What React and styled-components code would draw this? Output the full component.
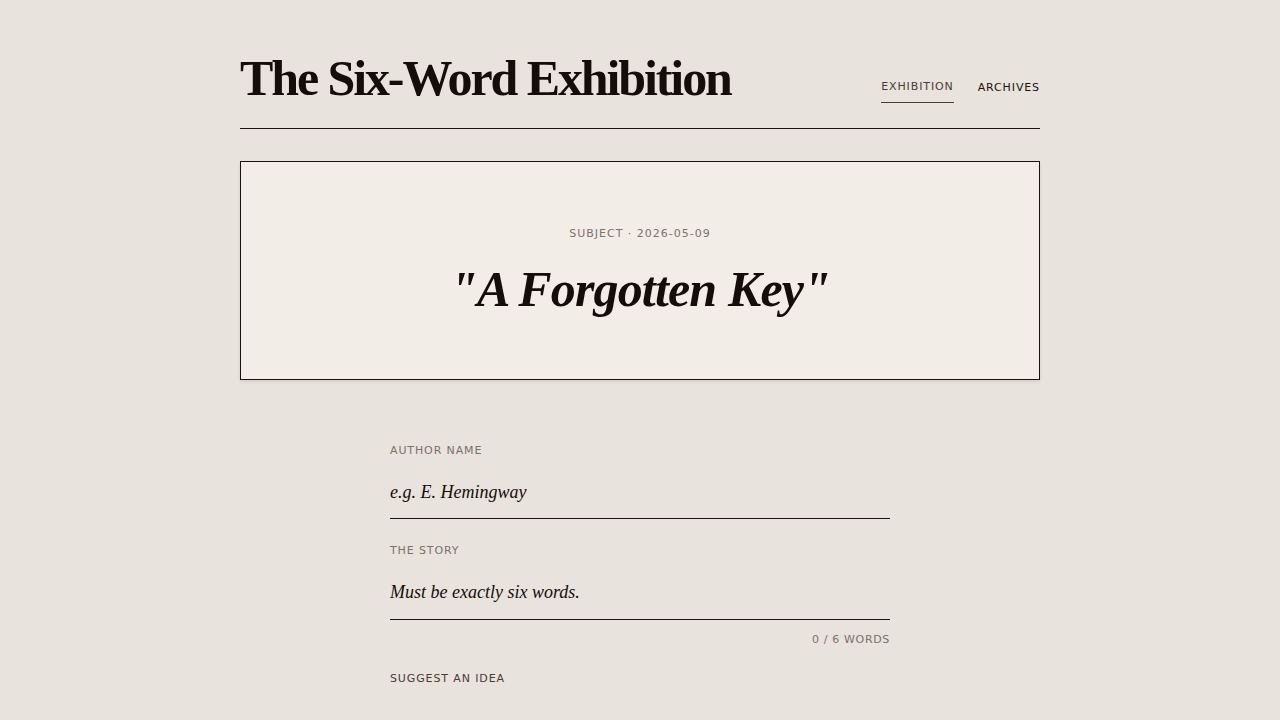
import React, { useState } from "react"
import styled, { createGlobalStyle } from "styled-components"

const GlobalStyle = createGlobalStyle`
  html, body {
    margin: 0;
    padding: 0;
    background: #e8e3dd;
    color: #140d0a;
    font-family: "DejaVu Sans", sans-serif;
  }
  * { box-sizing: border-box; }
`

const Page = styled.div`
  width: 800px;
  margin: 0 auto;
  padding-top: 51px;
`

const Header = styled.header`
  display: flex;
  justify-content: space-between;
  align-items: flex-end;
  border-bottom: 1px solid #1a1210;
  padding-bottom: 22px;
`

const Title = styled.h1`
  margin: 0;
  font-family: "Liberation Serif", serif;
  font-weight: 700;
  font-size: 50px;
  line-height: 55px;
  letter-spacing: -2.1px;
  color: #140d0a;
`

const Nav = styled.nav`
  display: flex;
  align-items: flex-end;
  gap: 24px;
  margin-bottom: 3px;
`

const NavLink = styled.a`
  font-size: 11px;
  letter-spacing: 0.08em;
  text-transform: uppercase;
  text-decoration: none;
  cursor: pointer;
  padding-bottom: ${(p) => (p.active ? "9px" : "8px")};
  color: ${(p) => (p.active ? "#4a3b36" : "#1a1210")};
  border-bottom: 1px solid ${(p) => (p.active ? "#4a3b36" : "transparent")};
`

const SubjectCard = styled.section`
  margin-top: 32px;
  background: #f2ede7;
  border: 1px solid #1a1210;
  box-shadow: 0 2px 3px rgba(60, 40, 30, 0.1);
  padding: 65px 40px 60px;
  text-align: center;
`

const Meta = styled.div`
  font-size: 11px;
  letter-spacing: 1px;
  color: #7d716b;
  text-transform: uppercase;
`

const Subject = styled.h2`
  margin: 19px 0 0;
  font-family: "Liberation Serif", serif;
  font-style: italic;
  font-weight: 700;
  font-size: 50px;
  line-height: 60px;
  letter-spacing: -0.85px;
  color: #140d0a;
`

const Form = styled.form`
  width: 500px;
  margin: 64px auto 0;
`

const Field = styled.div`
  display: flex;
  flex-direction: column;
  margin-bottom: ${(p) => p.gap || "0"};
`

const Label = styled.label`
  font-size: 11px;
  letter-spacing: 0.08em;
  color: #7d716b;
  text-transform: uppercase;
`

const Input = styled.input`
  margin-top: 18px;
  border: none;
  border-bottom: 1px solid #1a1210;
  background: transparent;
  padding: 7px 0 ${(p) => (p.tall ? "16px" : "15px")};
  font-family: "Liberation Serif", serif;
  font-style: italic;
  font-size: 18px;
  color: #140d0a;
  outline: none;
  &::placeholder {
    color: #140d0a;
    opacity: 1;
  }
`

const Counter = styled.div`
  margin-top: 13px;
  text-align: right;
  font-size: 11px;
  letter-spacing: 0.06em;
  color: #7d716b;
`

const Suggest = styled.button`
  margin-top: 26px;
  padding: 0;
  border: none;
  background: none;
  font-family: "DejaVu Sans", sans-serif;
  font-size: 11px;
  letter-spacing: 0.08em;
  color: #4a3b36;
  text-transform: uppercase;
  cursor: pointer;
`

export default function App() {
  const [author, setAuthor] = useState("")
  const [story, setStory] = useState("")
  const words = story.trim() ? story.trim().split(/\s+/).length : 0

  return (
    <>
      <GlobalStyle />
      <Page>
        <Header>
          <Title>The Six-Word Exhibition</Title>
          <Nav>
            <NavLink active>Exhibition</NavLink>
            <NavLink>Archives</NavLink>
          </Nav>
        </Header>

        <SubjectCard>
          <Meta>Subject · 2026-05-09</Meta>
          <Subject>"A Forgotten Key"</Subject>
        </SubjectCard>

        <Form onSubmit={(e) => e.preventDefault()}>
          <Field gap="25px">
            <Label>Author Name</Label>
            <Input
              placeholder="e.g. E. Hemingway"
              value={author}
              onChange={(e) => setAuthor(e.target.value)}
            />
          </Field>
          <Field>
            <Label>The Story</Label>
            <Input
              tall
              placeholder="Must be exactly six words."
              value={story}
              onChange={(e) => setStory(e.target.value)}
            />
          </Field>
          <Counter>{words} / 6 WORDS</Counter>
          <Suggest type="button">Suggest an idea</Suggest>
        </Form>
      </Page>
    </>
  )
}
